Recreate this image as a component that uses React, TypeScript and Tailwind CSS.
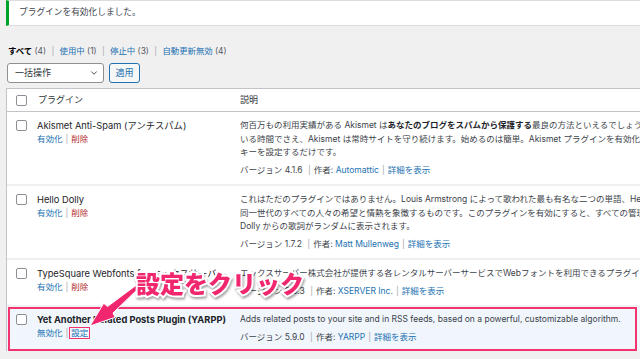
import { ChevronDown } from "lucide-react";

const FONT = "font-['Inter','Noto_Sans_CJK_JP',sans-serif]";

function Checkbox() {
  return <span className="block w-[11px] h-[11px] rounded-[2px] border border-[#8c8f94] bg-white" />;
}

function Sep() {
  return <span className="text-[#a7aaad] mx-[3px]">|</span>;
}

function Version({ ver, author }: { ver: string; author: string }) {
  return (
    <div className="mt-[4px] whitespace-nowrap text-[#3c434a]">
      バージョン {ver} <Sep />作者: <span className="text-[#2271b1]">{author}</span>
      <Sep />
      <span className="text-[#2271b1]">詳細を表示</span>
    </div>
  );
}

interface Row {
  name: string;
  lines: React.ReactNode[];
  ver: string;
  author: string;
}

const ROWS: Row[] = [
  {
    name: "Akismet Anti-Spam (アンチスパム)",
    lines: [
      <>
        何百万もの利用実績がある Akismet は<b className="text-[#1d2327]">あなたのブログをスパムから保護する</b>最良の方法といえるでしょう。あなたが寝て
      </>,
      "いる時間でさえ、Akismet は常時サイトを守り続けます。始めるのは簡単。Akismet プラグインを有効化し、API",
      "キーを設定するだけです。",
    ],
    ver: "4.1.6",
    author: "Automattic",
  },
  {
    name: "Hello Dolly",
    lines: [
      "これはただのプラグインではありません。Louis Armstrong によって歌われた最も有名な二つの単語、Hello, Dolly に要約された",
      "同一世代のすべての人々の希望と情熱を象徴するものです。このプラグインを有効にすると、すべての管理画面の右上に Hello,",
      "Dolly からの歌詞がランダムに表示されます。",
    ],
    ver: "1.7.2",
    author: "Matt Mullenweg",
  },
  {
    name: "TypeSquare Webfonts for エックスサーバー",
    lines: ["エックスサーバー株式会社が提供する各レンタルサーバーサービスでWebフォントを利用できるプラグインです。"],
    ver: "2.0.3",
    author: "XSERVER Inc.",
  },
];

export default function App() {
  return (
    <div className={`${FONT} relative w-[640px] h-[359px] overflow-hidden bg-[#f0f0f1] text-[8.5px] leading-[13.5px] text-[#3c434a]`}>
      {/* notice */}
      <div className="ml-[6px] h-[26px] bg-white border-l-[3px] border-l-[#00a32a] border-y border-y-[#dcdcde] flex items-center pl-[10px] text-[8.7px]">
        プラグインを有効化しました。
      </div>

      {/* filters */}
      <div className="mt-[19px] ml-[8px] h-[13px] leading-[13px] whitespace-nowrap text-[#50575e] text-[8.4px]">
        <b className="text-black">すべて</b> (4) <Sep /> <span className="text-[#2271b1]">使用中</span> (1) <Sep />{" "}
        <span className="text-[#2271b1]">停止中</span> (3) <Sep /> <span className="text-[#2271b1]">自動更新無効</span> (4)
      </div>

      {/* bulk actions */}
      <div className="mt-[5px] ml-[7px] flex gap-[5px]">
        <div className="w-[97px] h-[20px] bg-white border border-[#8c8f94] rounded-[3px] flex items-center justify-between pl-[7px] pr-[4px] text-[#2c3338] text-[9px]">
          一括操作
          <ChevronDown className="w-[10px] h-[10px] text-[#2c3338]" strokeWidth={2} />
        </div>
        <div className="w-[31px] h-[20px] bg-[#f6f7f7] border border-[#2271b1] rounded-[3px] flex items-center justify-center text-[#2271b1] text-[9px]">
          適用
        </div>
      </div>

      {/* table */}
      <div className="mt-[5px] ml-[6px] w-[634px] bg-white border-l border-t border-[#c3c4c7]">
        <div className="h-[23px] flex items-center border-b border-[#c3c4c7] text-[#2c3338] text-[9px]">
          <div className="w-[30px] pl-[9px]">
            <Checkbox />
          </div>
          <div className="w-[203px] pl-[1px]">プラグイン</div>
          <div>説明</div>
        </div>

        {ROWS.map((r) => (
          <div key={r.name} className="flex pt-[7px] pb-[7px] border-b-2 border-[#f0f0f1]">
            <div className="w-[30px] pl-[9px] pt-[1px]">
              <Checkbox />
            </div>
            <div className="w-[203px] shrink-0">
              <div className="text-[#1d2327] text-[9.3px] whitespace-nowrap">{r.name}</div>
              <div>
                <span className="text-[#2271b1]">有効化</span>
                <Sep />
                <span className="text-[#b32d2e]">削除</span>
              </div>
            </div>
            <div className="flex-1 min-w-0 overflow-hidden">
              {r.lines.map((l, i) => (
                <div key={i} className="whitespace-nowrap">
                  {l}
                </div>
              ))}
              <Version ver={r.ver} author={r.author} />
            </div>
          </div>
        ))}

        {/* active row */}
        <div className="relative flex pt-[6px] pb-[7px] bg-[#f0f6fc]">
          <div className="w-[30px] pl-[9px] pt-[1px]">
            <Checkbox />
          </div>
          <div className="w-[203px] shrink-0">
            <div className="font-bold text-[9.3px] text-[#1d2327] whitespace-nowrap">Yet Another Related Posts Plugin (YARPP)</div>
            <div>
              <span className="text-[#2271b1]">無効化</span>
              <Sep />
              <span className="relative text-[#2271b1]">
                設定
                <span className="absolute -left-[2px] -right-[2px] -top-[1px] -bottom-[1px] border-[1.5px] border-[#f2336f]" />
              </span>
            </div>
          </div>
          <div className="flex-1 min-w-0 overflow-hidden">
            <div className="whitespace-nowrap">
              Adds related posts to your site and in RSS feeds, based on a powerful, customizable algorithm.
            </div>
            <Version ver="5.9.0" author="YARPP" />
          </div>
          <div className="absolute left-[1px] right-[3px] top-0 bottom-0 border-2 border-[#f2336f]" />
        </div>
      </div>

      {/* annotation */}
      <svg className="absolute left-[80px] top-[278px]" width="70" height="55" viewBox="0 0 70 55">
        <polygon
          points="58,8 59,10 33,35 35.1,39.3 10,48 23.7,25.3 27.5,28.5 56.5,7"
          fill="#f0266e"
          stroke="white"
          strokeWidth="1"
          strokeLinejoin="round"
        />
      </svg>
      <div className="absolute left-[136px] top-[270px] text-[24px] leading-[30px] font-black text-[#f0266e] whitespace-nowrap [-webkit-text-stroke:4px_white] [paint-order:stroke_fill] drop-shadow-[1px_2px_1px_rgba(0,0,0,0.35)]">
        設定をクリック
      </div>
    </div>
  );
}
